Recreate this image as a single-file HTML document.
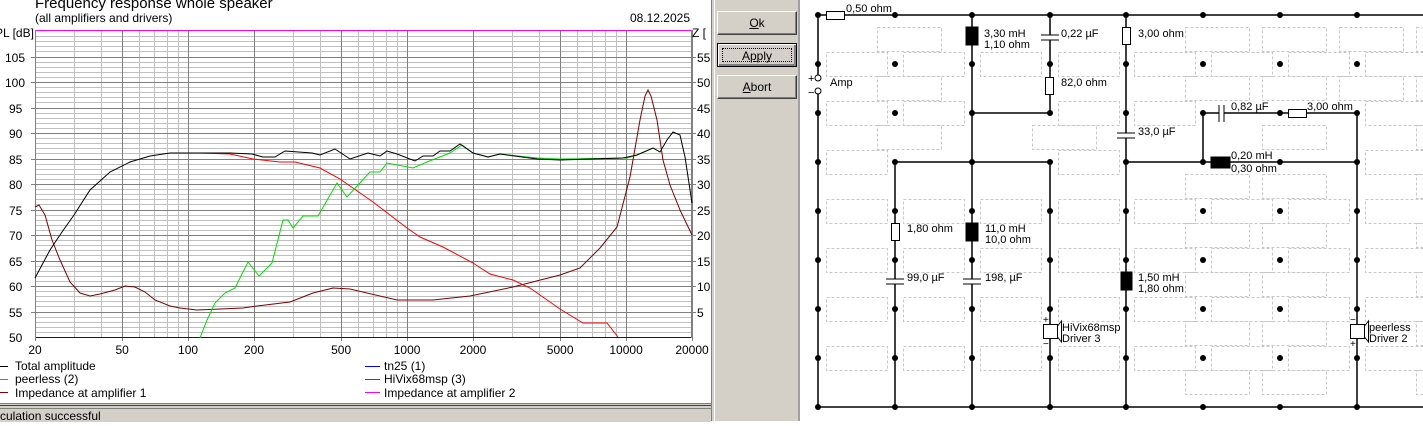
<!DOCTYPE html>
<html><head><meta charset="utf-8"><style>
html,body{margin:0;padding:0;}
body{width:1423px;height:421px;position:relative;overflow:hidden;background:#fff;font-family:"Liberation Sans",sans-serif;}
#left{position:absolute;left:0;top:0;width:711px;height:403px;background:#fff;overflow:hidden;}
#status{position:absolute;left:0;top:403px;width:711px;height:18px;background:#d4d0c8;border-top:1px solid #808080;}
#status:before{content:"";position:absolute;left:0;right:0;top:1px;height:1px;background:#404040;}
#status:after{content:"";position:absolute;left:0;right:0;top:4px;height:1px;background:#808080;}
#status span{position:absolute;left:0;top:5px;font-size:12px;color:#000;}
#div{position:absolute;left:711px;top:0;width:4px;height:421px;background:#d4d0c8;border-left:1px solid #808080;border-right:1px solid #fff;box-sizing:border-box;}
#panel{position:absolute;left:715px;top:0;width:85px;height:421px;background:#d4d0c8;border-right:2px solid #a0a0a0;box-sizing:border-box;}
.btn{position:absolute;left:2px;width:80px;height:24px;background:#d4d0c8;box-sizing:border-box;border:1px solid;border-color:#fff #404040 #404040 #fff;box-shadow:inset -1px -1px 0 #808080;font-size:12px;text-align:center;line-height:22px;color:#000;}
.btn u{text-decoration:underline;}
#apply{border:1px solid #000;box-shadow:inset 1px 1px 0 #fff,inset -2px -2px 0 #808080;}
#apply span{position:absolute;left:4px;top:4px;right:4px;bottom:4px;border:1px dotted #000;line-height:14px;}
#circ{position:absolute;left:802px;top:0;width:621px;height:421px;background:#fff;}
svg text{font-family:"Liberation Sans",sans-serif;}
</style></head><body>
<div id="left">
<svg width="711" height="403" xmlns="http://www.w3.org/2000/svg">
<g id="pgrid" shape-rendering="crispEdges"></g>
<line x1="35" y1="30.5" x2="692" y2="30.5" stroke="#ff00ff" shape-rendering="crispEdges"/>
<line x1="35" y1="337.5" x2="692" y2="337.5" stroke="#0000ff" shape-rendering="crispEdges"/>
<line x1="35.5" y1="30" x2="35.5" y2="338" stroke="#808080" shape-rendering="crispEdges"/>
<line x1="691.5" y1="30" x2="691.5" y2="338" stroke="#808080" shape-rendering="crispEdges"/>
<g id="plabels" font-size="12" fill="#000"></g>
<text x="35" y="8" font-size="15">Frequency response whole speaker</text>
<text x="35" y="22" font-size="12">(all amplifiers and drivers)</text>
<text x="690" y="22" font-size="12" text-anchor="end">08.12.2025</text>
<text x="-5" y="37" font-size="12">PL [dB]</text>
<text x="692" y="37" font-size="12">Z [</text>
<polyline fill="none" stroke="#800000" points="35,207 39,205 45,215 52,240 60,260 70,282 80,293 90,296 100,294 115,290 125,286 135,287 145,292 155,300 170,306 180,308 197,310 243,308 257,306 290,302 313,293 333,288 350,289 397,300 433,300 470,296 513,287 560,275 580,268 600,248 617,227 630,177 640,120 645,96 648,90 651,96 657,120 663,160 670,185 680,210 692,235"/>
<polyline fill="none" stroke="#ff0000" points="170,153 200,153 230,154 253,159 280,162 295,162 320,168 340,179 373,202 407,228 420,237 443,247 473,263 490,274 513,280 530,288 560,309 583,323 607,323 618,337"/>
<polyline fill="none" stroke="#00dd00" points="200,338 207,320 215,303 225,293 235,288 248,262 259,276 272,263 283,220 288,220 293,228 303,216 318,216 337,183 347,197 370,172 380,172 387,163 413,168 427,162 450,153 462,145 473,153 488,157 500,154 537,158 560,159 627,158 637,155 653,148 660,152"/>
<polyline fill="none" stroke="#000" points="35,278 50,250 62,232 74,215 90,190 110,172 130,162 150,156 170,153 230,153 252,154 263,157 275,157 285,151 312,153 320,155 335,149 350,159 368,153 380,156 387,151 397,154 415,161 423,156 433,156 440,151 450,151 460,144 473,153 488,157 500,154 537,159 560,160 623,158 637,155 653,148 660,152 667,140 673,132 680,135 685,157 692,203"/>
<line x1="0" y1="366.5" x2="8" y2="366.5" stroke="#000"/><text x="15" y="370" font-size="12">Total amplitude</text>
<line x1="0" y1="379.5" x2="8" y2="379.5" stroke="#00cc00"/><text x="15" y="383" font-size="12">peerless (2)</text>
<line x1="0" y1="392.5" x2="8" y2="392.5" stroke="#800000"/><text x="15" y="397" font-size="12">Impedance at amplifier 1</text>
<line x1="365" y1="366.5" x2="380" y2="366.5" stroke="#0000ff"/><text x="384" y="370" font-size="12">tn25 (1)</text>
<line x1="365" y1="379.5" x2="380" y2="379.5" stroke="#ff0000"/><text x="384" y="383" font-size="12">HiVix68msp (3)</text>
<line x1="365" y1="392.5" x2="380" y2="392.5" stroke="#ff00ff"/><text x="384" y="397" font-size="12">Impedance at amplifier 2</text>
</svg>
</div>
<div id="status"><span>culation successful</span></div>
<div id="div"></div>
<div id="panel">
<div class="btn" style="top:11px"><u>O</u>k</div>
<div class="btn" id="apply" style="top:43px"><span>A<u>p</u>ply</span></div>
<div class="btn" style="top:75px"><u>A</u>bort</div>
</div>
<div id="circ">
<svg width="621" height="421" viewBox="802 0 621 421" xmlns="http://www.w3.org/2000/svg">
<g id="boxes" fill="none" stroke="#c8c8c8" stroke-dasharray="3,2" shape-rendering="crispEdges"></g>
<g id="wires" stroke="#000" stroke-width="1.5"></g>
<g stroke="#000" stroke-width="1">
<rect x="826.5" y="11.5" width="18" height="8" fill="#fff"/>
<rect x="1122.5" y="27.5" width="8" height="17" fill="#fff"/>
<rect x="1045.5" y="77.5" width="8" height="17" fill="#fff"/>
<rect x="891.5" y="223.5" width="8" height="17" fill="#fff"/>
<rect x="1288.5" y="109.5" width="18" height="8" fill="#fff"/>
<rect x="966" y="27" width="12" height="18" fill="#000"/>
<rect x="966" y="223" width="12" height="18" fill="#000"/>
<rect x="1121" y="272" width="11" height="18" fill="#000"/>
<rect x="1211" y="157" width="19" height="11" fill="#000"/>
<rect x="1040" y="35" width="20" height="5" fill="#fff" stroke="none"/>
<line x1="1041" y1="35" x2="1059" y2="35"/><line x1="1041" y1="40" x2="1059" y2="40"/>
<rect x="1116" y="133" width="20" height="5" fill="#fff" stroke="none"/>
<line x1="1117" y1="133" x2="1135" y2="133"/><line x1="1117" y1="138" x2="1135" y2="138"/>
<rect x="885" y="279" width="20" height="5" fill="#fff" stroke="none"/>
<line x1="886" y1="279" x2="904" y2="279"/><line x1="886" y1="284" x2="904" y2="284"/>
<rect x="962" y="279" width="20" height="5" fill="#fff" stroke="none"/>
<line x1="963" y1="279" x2="981" y2="279"/><line x1="963" y1="284" x2="981" y2="284"/>
<rect x="1219" y="105" width="5" height="16" fill="#fff" stroke="none"/>
<line x1="1219" y1="105" x2="1219" y2="122"/><line x1="1224" y1="105" x2="1224" y2="122"/>
<rect x="1043.5" y="324.5" width="14" height="14" fill="#fff"/>
<polyline points="1057.5,326 1061.5,321 1061.5,342 1057.5,337" fill="none"/>
<rect x="1350.5" y="324.5" width="14" height="14" fill="#fff"/>
<polyline points="1364.5,326 1368.5,321 1368.5,342 1364.5,337" fill="none"/>
<circle cx="818" cy="78" r="3" fill="#fff"/>
<circle cx="818" cy="91" r="3" fill="#fff"/>
</g>
<g id="dots" fill="#000"></g>
<g font-size="11" fill="#000">
<text x="808" y="82">+</text><text x="808" y="96">−</text>
<text x="1043" y="323" font-size="10">+</text><text x="1043" y="347" font-size="10">−</text>
<text x="1350" y="323" font-size="10">−</text><text x="1350" y="347" font-size="10">+</text>
<text x="846" y="12">0,50 ohm</text>
<text x="830" y="86">Amp</text>
<text x="984" y="37">3,30 mH</text><text x="984" y="48">1,10 ohm</text>
<text x="1061" y="37">0,22 µF</text>
<text x="1061" y="86">82,0 ohm</text>
<text x="1138" y="37">3,00 ohm</text>
<text x="1138" y="135">33,0 µF</text>
<text x="1231" y="110">0,82 µF</text>
<text x="1307" y="110">3,00 ohm</text>
<text x="1231" y="159">0,20 mH</text><text x="1231" y="172">0,30 ohm</text>
<text x="907" y="232">1,80 ohm</text>
<text x="985" y="232">11,0 mH</text><text x="985" y="243">10,0 ohm</text>
<text x="907" y="281">99,0 µF</text>
<text x="985" y="281">198, µF</text>
<text x="1138" y="281">1,50 mH</text><text x="1138" y="292">1,80 ohm</text>
<text x="1062" y="331">HiVix68msp</text><text x="1062" y="342">Driver 3</text>
<text x="1369" y="331">peerless</text><text x="1369" y="342">Driver 2</text>
</g>
</svg>
</div>
<script>
(function(){
var NS='http://www.w3.org/2000/svg';
function add(g,tag,a){var e=document.createElementNS(NS,tag);for(var k in a)e.setAttribute(k,a[k]);g.appendChild(e);return e;}
var pg=document.getElementById('pgrid');
function X(f){return 35+219*Math.log10(f/20);}
var d,y,f,m;
for(d=51;d<110;d++){if(d%5){y=Math.round(337-(d-50)*5.1)+0.5;add(pg,'line',{x1:35,x2:692,y1:y,y2:y,stroke:'#c0c0c0'});}}
var decs=[10,100,1000,10000];
for(var i=0;i<4;i++){for(m=1;m<=9;m++){f=m*decs[i];if(f<20||f>20000)continue;if(m==1||m==2||m==5)continue;var x=Math.round(X(f))+0.5;add(pg,'line',{x1:x,x2:x,y1:30,y2:337,stroke:'#c0c0c0'});}}
for(d=55;d<110;d+=5){y=Math.round(337-(d-50)*5.1)+0.5;add(pg,'line',{x1:31,x2:692,y1:y,y2:y,stroke:'#808080'});add(pg,'line',{x1:692,x2:696,y1:y,y2:y,stroke:'#808080'});}
var maj=[20,50,100,200,500,1000,2000,5000,10000,20000];
for(i=0;i<maj.length;i++){var x=Math.round(X(maj[i]))+0.5;add(pg,'line',{x1:x,x2:x,y1:30,y2:341,stroke:'#808080'});}
var pl=document.getElementById('plabels');
for(d=50;d<=105;d+=5){y=Math.round(337-(d-50)*5.1);var t=add(pl,'text',{x:d>=100?5:9,y:y+5});t.textContent=d;
 if(d>50){var t2=add(pl,'text',{x:697,y:y+5});t2.textContent=(d-50);}}
for(i=0;i<maj.length;i++){var t=add(pl,'text',{x:X(maj[i]),y:354,'text-anchor':'middle'});t.textContent=maj[i];}
var cols=[818,895,972,1050,1126,1203,1280,1357,1434];
var rows=[15,64,113,162,211,260,309,358,407];
var vw={818:[[15,75],[94,407]],895:[[162,407]],972:[[15,407]],1050:[[15,113],[162,407]],1126:[[15,407]],1203:[[113,162]],1357:[[113,407]]};
var hw={15:[[818,1434]],113:[[972,1050],[1203,1357]],162:[[895,1050],[1126,1357]],407:[[818,1434]]};
function covV(c,a,b){var s=vw[c]||[];if(c==818)return true;for(var k=0;k<s.length;k++)if(s[k][0]<=a&&s[k][1]>=b)return true;return false;}
function covH(r,a,b){var s=hw[r]||[];for(var k=0;k<s.length;k++)if(s[k][0]<=a&&s[k][1]>=b)return true;return false;}
var bx=document.getElementById('boxes');
for(var ci=0;ci<cols.length;ci++){var c=cols[ci];
 for(var ri=0;ri<rows.length-1;ri++){var r=rows[ri];
  if(!covV(c,r,r+49))add(bx,'rect',{x:c-18+0.5,y:r+12+0.5,width:64,height:24});}}
for(ri=0;ri<rows.length;ri++){var r=rows[ri];
 for(ci=0;ci<cols.length;ci++){var c=cols[ci];
  if(!covH(r,c,c+77))add(bx,'rect',{x:c+8+0.5,y:r-12+0.5,width:61,height:24});}}
var wg=document.getElementById('wires');
for(var c in vw){vw[c].forEach(function(s){add(wg,'line',{x1:c,x2:c,y1:s[0],y2:s[1]});});}
for(var r in hw){hw[r].forEach(function(s){add(wg,'line',{x1:s[0],x2:s[1],y1:r,y2:r});});}
var dg=document.getElementById('dots');
for(ci=0;ci<cols.length;ci++)for(ri=0;ri<rows.length;ri++)add(dg,'circle',{cx:cols[ci],cy:rows[ri],r:3});
})();
</script>
</body></html>
